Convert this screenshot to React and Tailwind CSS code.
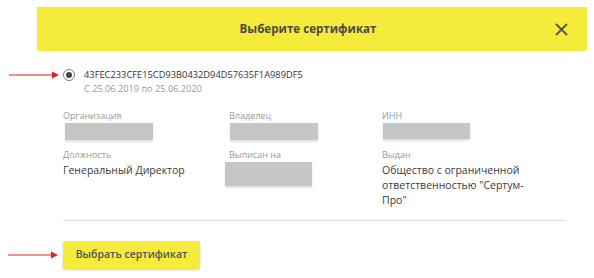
import React from 'react';

const font = { fontFamily: '"Open Sans", "Liberation Sans", sans-serif' };

const Arrow = () => (
    <svg width="54" height="8" viewBox="0 0 54 8" className="shrink-0">
        <line x1="0" y1="4" x2="46" y2="4" stroke="#e0201a" strokeWidth="1.2" />
        <polygon points="43,0.5 50,4 43,7.5" fill="#e0201a" />
    </svg>
);

const Redacted = ({ w, h }) => (
    <div className={`${w} ${h} bg-[#c6c6c6] blur-[0.6px] shadow-[0_2px_2px_rgba(0,0,0,0.12)]`} />
);

const App = () => {
    return (
        <div className="w-[594px] h-[278px] bg-white overflow-hidden pt-[7px]" style={font}>
            {/* Header */}
            <div className="ml-[37px] w-[550px] h-[44px] bg-[#f4eb3b] flex items-center relative">
                <h1 className="flex-1 text-center text-[11.6px] font-bold text-[#4a4a4a] pr-[8px]">Выберите сертификат</h1>
                <button className="absolute right-[19px] top-[16px]">
                    <svg width="13" height="13" viewBox="0 0 13 13">
                        <path d="M1 1 L12 12 M12 1 L1 12" stroke="#555" strokeWidth="1.8" />
                    </svg>
                </button>
            </div>

            {/* Certificate radio */}
            <div className="flex items-start pl-[9px] mt-[17px]">
                <div className="h-[14px] flex items-center"><Arrow /></div>
                <div className="w-[12px] h-[12px] mt-[1px] rounded-full border border-[#777] flex items-center justify-center">
                    <div className="w-[6px] h-[6px] rounded-full bg-[#444]" />
                </div>
                <div className="ml-[9px]">
                    <div className="text-[9.3px] leading-[14px] text-[#333]">43FEC233CFE15CD93B0432D94D57635F1A989DF5</div>
                    <div className="text-[9.2px] leading-[14px] text-[#999]">С 25.06.2019 по 25.06.2020</div>
                </div>
            </div>

            {/* Fields */}
            <div className="pl-[63px] mt-[14px] grid grid-cols-[166px_153px_1fr]">
                <div>
                    <div className="text-[9px] leading-[12px] text-[#999]">Организация</div>
                    <div className="mt-[1px] ml-[2px]"><Redacted w="w-[88px]" h="h-[17px]" /></div>
                </div>
                <div>
                    <div className="text-[9px] leading-[12px] text-[#999]">Владелец</div>
                    <div className="mt-[1px] ml-[1px]"><Redacted w="w-[88px]" h="h-[17px]" /></div>
                </div>
                <div>
                    <div className="text-[9px] leading-[12px] text-[#999]">ИНН</div>
                    <div className="mt-[1px] ml-[1px]"><Redacted w="w-[87px]" h="h-[16px]" /></div>
                </div>

                <div className="mt-[9px]">
                    <div className="text-[9px] leading-[12px] text-[#999]">Должность</div>
                    <div className="mt-[2px] text-[10.5px] leading-[15px] text-[#3a3a3a]">Генеральный Директор</div>
                </div>
                <div className="mt-[9px]">
                    <div className="text-[9px] leading-[12px] text-[#999]">Выписан на</div>
                    <div className="mt-[1px] -ml-[4px]"><Redacted w="w-[87px]" h="h-[24px]" /></div>
                </div>
                <div className="mt-[9px]">
                    <div className="text-[9px] leading-[12px] text-[#999]">Выдан</div>
                    <div className="mt-[2px] text-[10.5px] leading-[15px] text-[#3a3a3a] w-[155px]">
                        Общество с ограниченной ответственностью "Сертум-Про"
                    </div>
                </div>
            </div>

            {/* Divider */}
            <div className="ml-[63px] w-[502px] h-px bg-[#dcdcdc] mt-[12px]" />

            {/* Button */}
            <div className="flex items-center pl-[8px] mt-[20px]">
                <Arrow />
                <button className="ml-[1px] w-[137px] h-[28px] rounded-[2px] bg-[#f4eb3b] shadow-[0_1px_3px_rgba(0,0,0,0.2)] text-[10.5px] font-semibold text-[#555]">
                    Выбрать сертификат
                </button>
            </div>
        </div>
    );
};

export default App;
